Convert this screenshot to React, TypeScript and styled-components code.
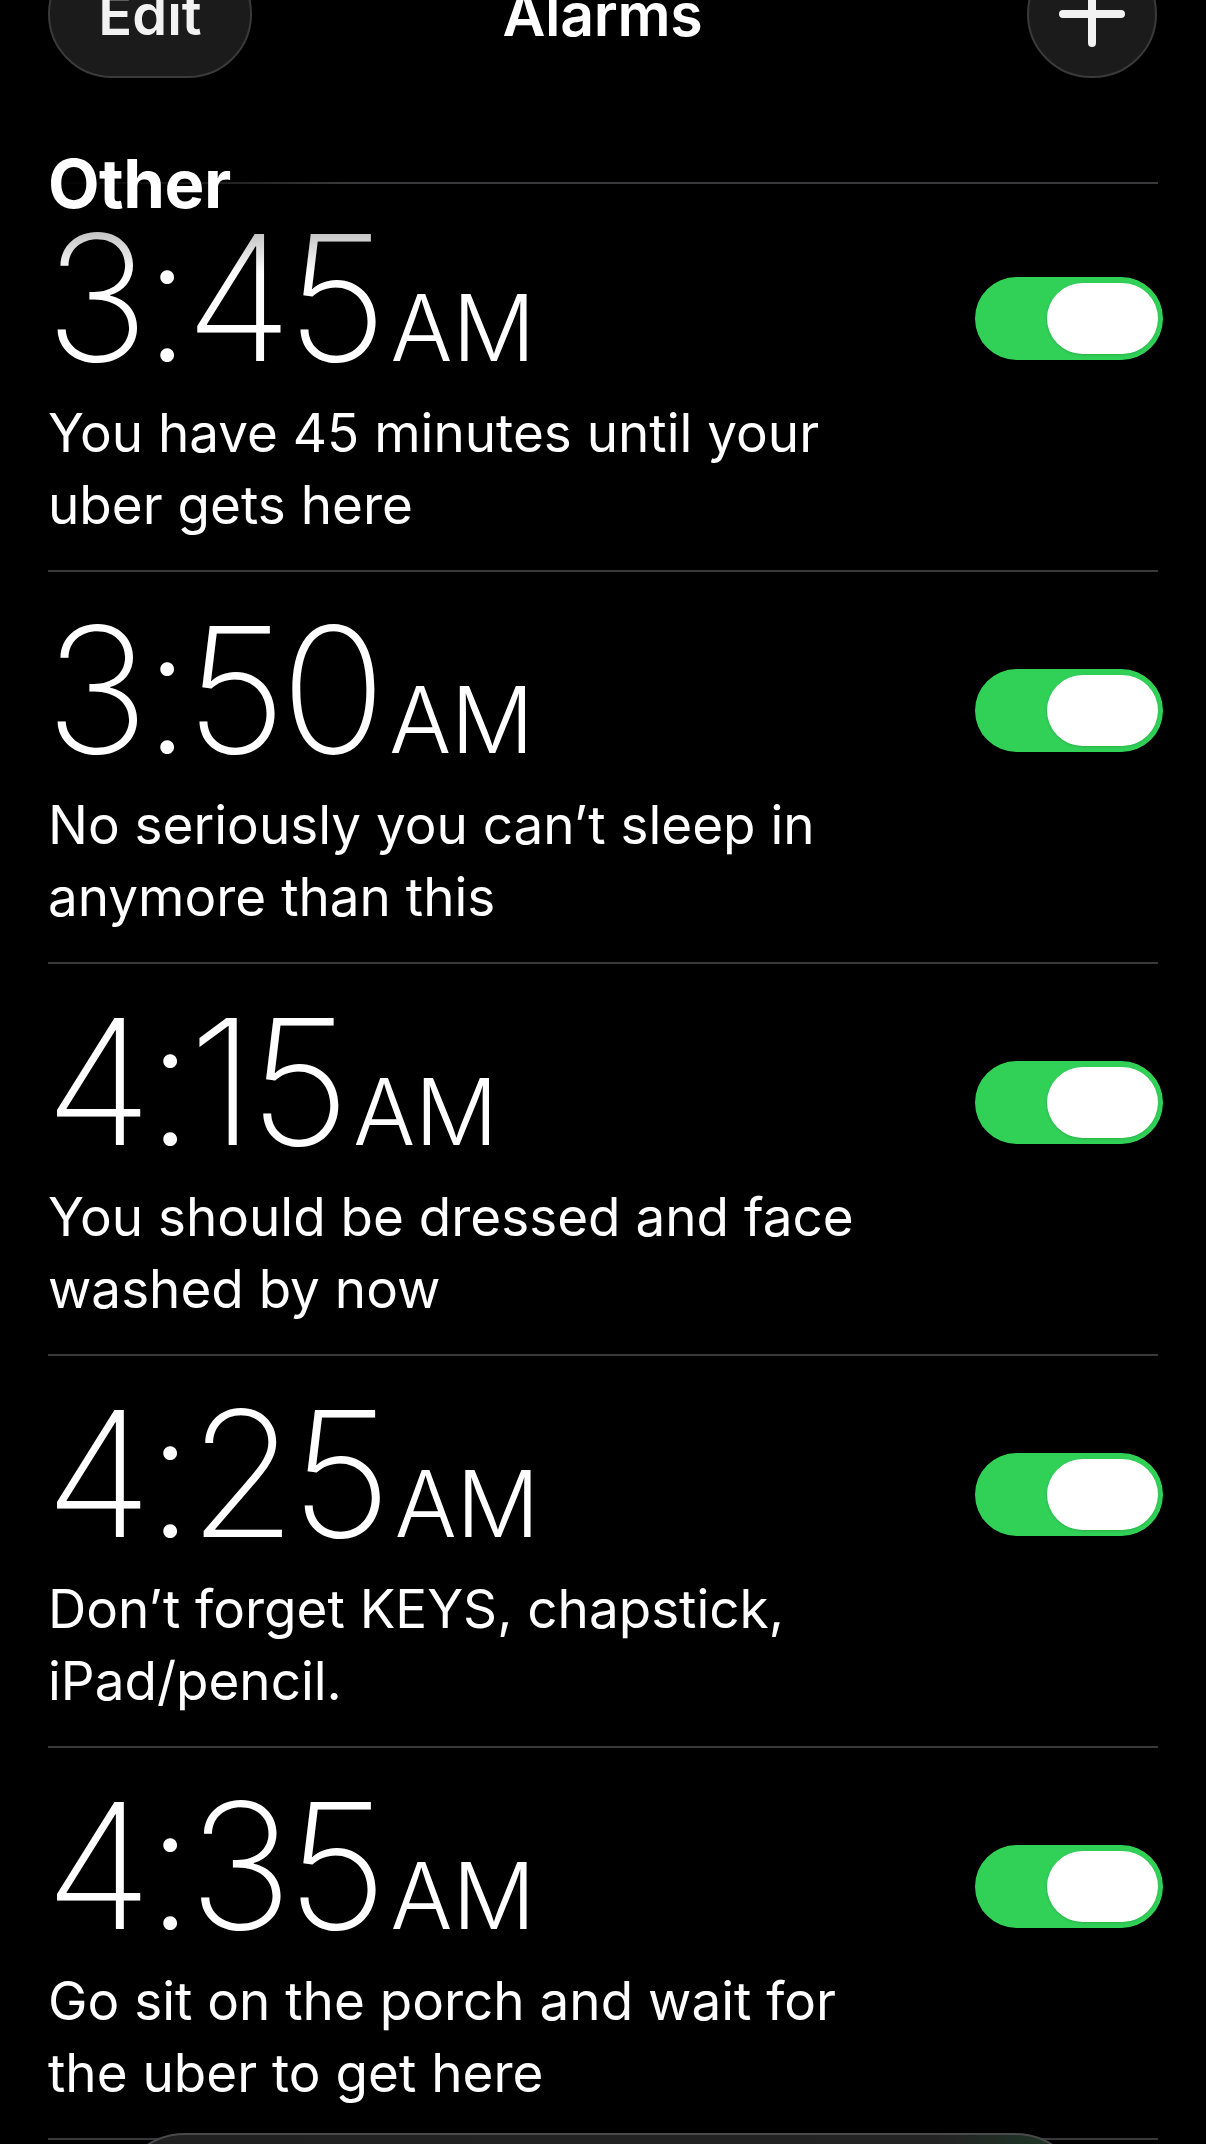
import * as React from 'react';
import styled, { createGlobalStyle } from 'styled-components';

type Alarm = {
    time: string,
    label: string,
    on: boolean
}

const alarms: Alarm[] = [
    { time: '3:45', label: 'You have 45 minutes until your uber gets here', on: true },
    { time: '3:50', label: 'No seriously you can’t sleep in anymore than this', on: true },
    { time: '4:15', label: 'You should be dressed and face washed by now', on: true },
    { time: '4:25', label: 'Don’t forget KEYS, chapstick, iPad/pencil.', on: true },
    { time: '4:35', label: 'Go sit on the porch and wait for the uber to get here', on: true },
];

const GlobalStyle = createGlobalStyle`
    html, body {
        margin: 0;
        padding: 0;
        background: #000;
    }
    body {
        font-family: Inter, 'Noto Sans', 'Liberation Sans', sans-serif;
        color: #fff;
    }
`

const Root = styled.div`
    width: 1206px;
    min-height: 2144px;
    overflow: hidden;
    background: #000;
`

const Header = styled.header`
    display: grid;
    grid-template-columns: 1fr auto 1fr;
    align-items: center;
    height: 128px;
    margin-top: -50px;
    padding: 0 49px 0 48px;
`

const GlassButton = styled.button`
    display: flex;
    align-items: center;
    justify-content: center;
    height: 128px;
    box-sizing: border-box;
    border-radius: 64px;
    background: #1b1b1c;
    border: 2px solid #3a3a3b;
    color: #f2f2f2;
    padding: 0;
    font-family: inherit;
`

const EditButton = styled(GlassButton)`
    width: 204px;
    font-size: 56px;
    font-weight: 600;
    justify-self: start;
    padding-top: 2px;
`

const AddButton = styled(GlassButton)`
    width: 130px;
    justify-self: end;
`

const Title = styled.h1`
    margin: 0;
    font-size: 59px;
    font-weight: 600;
    letter-spacing: -0.3px;
    color: #fff;
`

const SectionHeader = styled.div`
    position: relative;
    z-index: 2;
    height: 106px;
    margin: 0 48px -4px;
    box-sizing: border-box;
    padding-top: 72px;

    &::after {
        content: '';
        position: absolute;
        left: 0;
        right: 0;
        bottom: 0;
        height: 2px;
        background: linear-gradient(to right, rgba(58, 58, 60, 0) 0, rgba(58, 58, 60, 0.35) 120px, #3a3a3c 300px);
    }

    &::before {
        content: '';
        position: absolute;
        left: -48px;
        right: -48px;
        top: 100%;
        height: 90px;
        background: linear-gradient(to bottom, rgba(0, 0, 0, 0.5), rgba(0, 0, 0, 0));
        pointer-events: none;
    }
`

const SectionTitle = styled.h2`
    position: relative;
    z-index: 1;
    margin: 0;
    font-size: 67px;
    line-height: 68px;
    font-weight: 700;
    letter-spacing: -0.5px;
    color: #fff;
`

const List = styled.div`
    display: flex;
    flex-direction: column;
    padding: 0 48px;
`

const Row = styled.div`
    display: flex;
    justify-content: space-between;
    align-items: flex-start;
    height: 392px;
    box-sizing: border-box;
    border-bottom: 2px solid #38383a;
`

const Info = styled.div`
    display: flex;
    flex-direction: column;
`

const Time = styled.div`
    padding-top: 30px;
    margin-left: -3px;
    font-size: 175px;
    line-height: 175px;
    font-weight: 200;
    letter-spacing: -6px;
    white-space: nowrap;
    color: #fff;
`

const Meridiem = styled.span`
    margin-left: 9px;
    font-size: 92px;
    line-height: 0;
    font-weight: 300;
    letter-spacing: 0;
`

const Label = styled.div`
    max-width: 870px;
    margin-top: 12px;
    font-size: 53px;
    line-height: 72px;
    font-weight: 400;
    color: #fff;
`

const Track = styled.div<{ $on: boolean }>`
    display: flex;
    align-items: center;
    justify-content: ${p => (p.$on ? 'flex-end' : 'flex-start')};
    flex-shrink: 0;
    width: 188px;
    height: 83px;
    margin: 97px -5px 0 0;
    padding: 0 5px;
    box-sizing: border-box;
    border-radius: 42px;
    background: ${p => (p.$on ? '#31d158' : '#39393d')};
`

const Knob = styled.div`
    width: 111px;
    height: 71px;
    border-radius: 36px;
    background: #fff;
    box-shadow: 0 1px 3px rgba(0, 0, 0, 0.15);
`

const TabBarPeek = styled.div`
    position: fixed;
    left: 115px;
    top: 2133px;
    width: 970px;
    height: 140px;
    box-sizing: border-box;
    border-radius: 70px;
    border: 2px solid #4a4a4c;
    background: linear-gradient(to right, #202021 0, #232324 85%, #1d3a25 100%);
`

function PlusIcon() {
    return (
        <svg width="66" height="66" viewBox="0 0 66 66">
            <path d="M33 4 V62 M4 33 H62" stroke="#f2f2f2" strokeWidth="8" strokeLinecap="round" fill="none" />
        </svg>
    );
}

function Toggle({ on }: { on: boolean }) {
    return (
        <Track $on={on}>
            <Knob />
        </Track>
    );
}

export default function App() {
    return (
        <Root>
            <GlobalStyle />
            <Header>
                <EditButton>Edit</EditButton>
                <Title>Alarms</Title>
                <AddButton aria-label="Add alarm"><PlusIcon /></AddButton>
            </Header>
            <SectionHeader>
                <SectionTitle>Other</SectionTitle>
            </SectionHeader>
            <List>
                {alarms.map(alarm => (
                    <Row key={alarm.time}>
                        <Info>
                            <Time>{alarm.time}<Meridiem>AM</Meridiem></Time>
                            <Label>{alarm.label}</Label>
                        </Info>
                        <Toggle on={alarm.on} />
                    </Row>
                ))}
            </List>
            <TabBarPeek />
        </Root>
    );
}
